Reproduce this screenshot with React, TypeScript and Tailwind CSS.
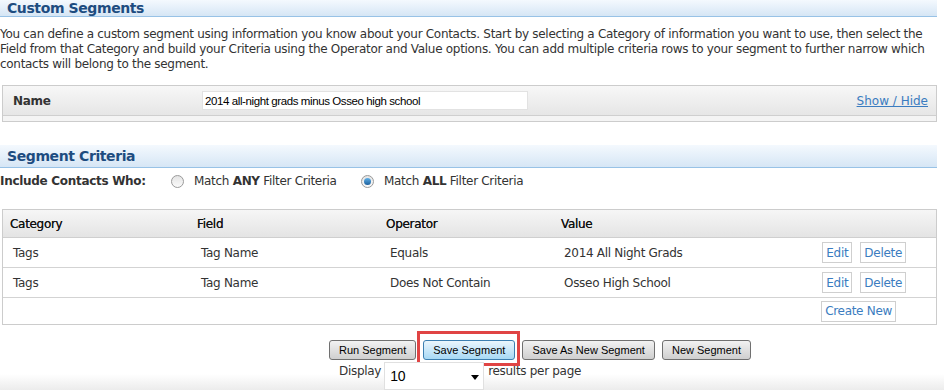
import React from "react";

const verdana = { fontFamily: '"DejaVu Sans", Verdana, sans-serif' };
const arial = { fontFamily: '"Liberation Sans", Arial, sans-serif' };

function SectionBar({ title, tall }: { title: string; tall?: boolean }) {
  return (
    <div
      className={
        "flex items-center pl-[7px] bg-gradient-to-b from-[#f4f9fe] to-[#d6e6f5] border-b border-[#98c2e6] " +
        (tall ? "h-[23px]" : "h-[17px]")
      }
    >
      <span className="text-[14px] font-bold text-[#1d4c80] tracking-[-0.4px]">{title}</span>
    </div>
  );
}

function SmallBtn({ label }: { label: string }) {
  return (
    <span className="inline-flex items-center h-[21px] px-[3px] border border-[#cfcfcf] bg-white text-[#3b7cc0] text-[12px]">
      {label}
    </span>
  );
}

function GrayBtn({ label, active }: { label: string; active?: boolean }) {
  return (
    <button
      className={
        "h-[20px] px-[9px] rounded-[3px] border text-[11px] text-black leading-none " +
        (active
          ? "border-[#3c7fb1] bg-gradient-to-b from-[#eaf6fd] to-[#a7d9f5]"
          : "border-[#707070] bg-gradient-to-b from-[#f2f2f2] to-[#cfcfcf]")
      }
      style={arial}
    >
      {label}
    </button>
  );
}

function Radio({ checked }: { checked?: boolean }) {
  return (
    <span className="inline-flex items-center justify-center w-[13px] h-[13px] rounded-full border border-[#9a9a9a] bg-gradient-to-b from-[#e4e4e4] to-[#fafafa]">
      {checked && <span className="w-[7px] h-[7px] rounded-full bg-gradient-to-b from-[#5fb0e8] to-[#1b5f9c]" />}
    </span>
  );
}

const rows = [
  { cat: "Tags", field: "Tag Name", op: "Equals", val: "2014 All Night Grads" },
  { cat: "Tags", field: "Tag Name", op: "Does Not Contain", val: "Osseo High School" },
];

const intro = [
  "You can define a custom segment using information you know about your Contacts. Start by selecting a Category of information you want to use, then select the",
  "Field from that Category and build your Criteria using the Operator and Value options. You can add multiple criteria rows to your segment to further narrow which",
  "contacts will belong to the segment.",
];

export default function App() {
  return (
    <div className="w-[944px] h-[390px] bg-white text-[#333] overflow-hidden relative tracking-[-0.3px]" style={verdana}>
      <div className="absolute left-0 right-0 bottom-0 h-[16px] bg-gradient-to-b from-[#ffffff] to-[#ececec]" />
      <div className="w-[937px] relative">
        <SectionBar title="Custom Segments" />
        <div className="mt-[10px] text-[12px] leading-[15px] text-[#333]">
          {intro.map((l, i) => (
            <div key={i} className="whitespace-nowrap">
              {l}
            </div>
          ))}
        </div>

        {/* Name panel */}
        <div className="mt-[13px] ml-[2px] border border-[#cccccc]">
          <div className="h-[30px] flex items-center bg-gradient-to-b from-[#f7f7f7] to-[#e6e6e6] border-b border-[#cfcfcf]">
            <span className="w-[199px] pl-[10px] text-[12px] font-bold text-[#333]">Name</span>
            <input
              readOnly
              value="2014 all-night grads minus Osseo high school"
              className="w-[326px] h-[19px] bg-white border border-[#e2e2e2] px-[2px] text-[11.5px] text-black outline-none tracking-[-0.4px]"
              style={arial}
            />
            <span className="ml-auto mr-[8px] text-[12px] text-[#3b7cc0] underline tracking-normal">Show / Hide</span>
          </div>
          <div className="h-[5px] bg-[#f4f4f4]" />
        </div>

        <div className="mt-[23px]">
          <SectionBar title="Segment Criteria" tall />
        </div>

        <div className="mt-[4px] h-[18px] flex items-center text-[12px]">
          <span className="font-bold w-[171px] text-[#333]">Include Contacts Who:</span>
          <Radio />
          <span className="ml-[10px] w-[167px]">
            Match <b>ANY</b> Filter Criteria
          </span>
          <Radio checked />
          <span className="ml-[10px]">
            Match <b>ALL</b> Filter Criteria
          </span>
        </div>

        {/* Criteria table */}
        <div className="mt-[19px] ml-[2px] border border-[#cccccc] text-[12px]">
          <div className="h-[28px] flex items-center bg-gradient-to-b from-[#f6f6f6] to-[#e4e4e4] border-b border-[#cfcfcf] text-[#111] [text-shadow:0_0_0.5px_#333]">
            <span className="w-[187px] pl-[7px]">Category</span>
            <span className="w-[189px] pl-[7px]">Field</span>
            <span className="w-[175px] pl-[7px]">Operator</span>
            <span className="pl-[7px]">Value</span>
          </div>
          {rows.map((r, i) => (
            <div key={i} className="h-[30px] flex items-center border-b border-[#d3d3d3]">
              <span className="w-[188px] pl-[10px]">{r.cat}</span>
              <span className="w-[189px] pl-[10px]">{r.field}</span>
              <span className="w-[174px] pl-[10px]">{r.op}</span>
              <span className="pl-[10px]">{r.val}</span>
              <span className="ml-auto mr-[30px] flex gap-[8px]">
                <SmallBtn label="Edit" />
                <SmallBtn label="Delete" />
              </span>
            </div>
          ))}
          <div className="h-[26px] flex items-center justify-end pr-[40px]">
            <SmallBtn label="Create New" />
          </div>
        </div>

        {/* Action buttons */}
        <div className="mt-[15px] flex tracking-normal">
          <div className="ml-[329px] flex flex-col">
            <div className="flex items-center gap-[7px]">
              <GrayBtn label="Run Segment" />
              <span className="relative flex">
                <GrayBtn label="Save Segment" active />
                <span className="absolute -left-[6px] -top-[9px] -right-[5px] -bottom-[6px] border-[3px] border-[#e04444] pointer-events-none" />
              </span>
              <GrayBtn label="Save As New Segment" />
              <GrayBtn label="New Segment" />
            </div>
            <div className="flex items-start mt-[2px] text-[12px] text-[#333] tracking-[-0.3px]" style={verdana}>
              <span className="ml-[10px] mr-[3px]">Display</span>
              <span
                className="relative w-[100px] h-[28px] border border-[#e0e0e0] bg-white flex items-center pl-[5px] text-[14px] text-black"
                style={arial}
              >
                10
                <svg className="absolute right-[4px] top-[12px]" width="8" height="5" viewBox="0 0 8 5">
                  <path d="M0 0h8L4 5z" fill="#000" />
                </svg>
              </span>
              <span className="ml-[4px]">results per page</span>
            </div>
          </div>
        </div>
      </div>
    </div>
  );
}
